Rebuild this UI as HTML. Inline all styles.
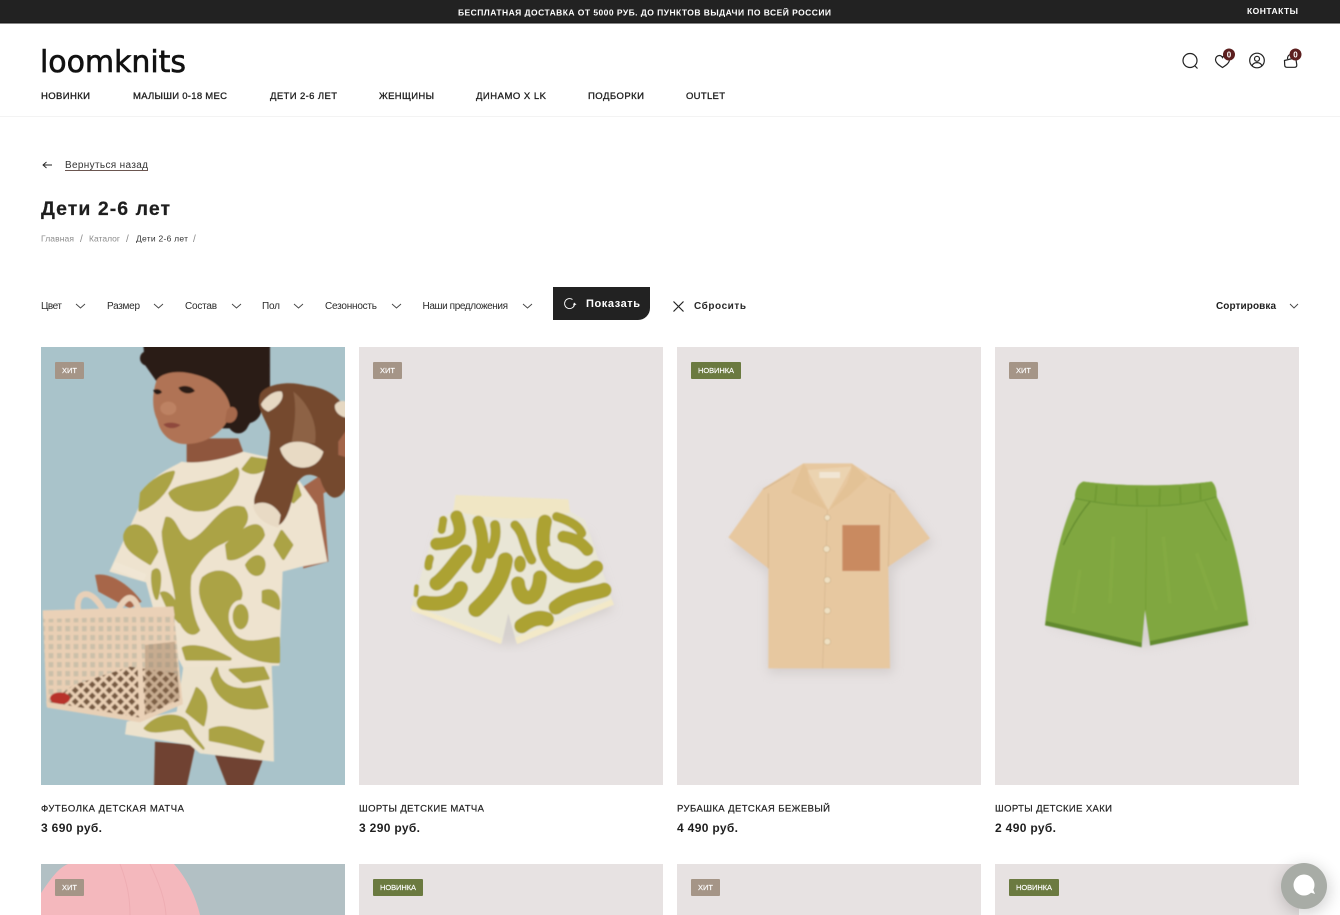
<!DOCTYPE html>
<html lang="ru">
<head>
<meta charset="utf-8">
<title>Дети 2-6 лет</title>
<style>
html,body{margin:0;padding:0;background:#fff;width:1340px;height:915px;overflow:hidden}
svg{display:block;position:absolute;left:0;top:0}
text{font-family:"Liberation Sans",Arial,sans-serif;fill:#1e1e1e}
.nav{font-size:9.5px;stroke:#1e1e1e;stroke-width:.3}
.top{font-size:8.5px;font-weight:700;fill:#fff}
.fl{font-size:10px;fill:#2a2a2a}
.nm{font-size:9.5px;fill:#222;stroke:#222;stroke-width:.2}
.pr{font-size:12px;font-weight:700}
.tg{font-size:7.5px;fill:#fff;stroke:#fff;stroke-width:.15}
.cr{font-size:8.5px;fill:#8a8a8a}
.sl{font-size:10px;fill:#8a8a8a}
.ch{fill:none;stroke:#444;stroke-width:.9}
.ic{fill:none;stroke:#222;stroke-width:1.2}
</style>
</head>
<body>
<svg width="1340" height="915" viewBox="0 0 1340 915" xmlns="http://www.w3.org/2000/svg">
<defs>
<filter id="b1" x="-5%" y="-5%" width="110%" height="110%"><feGaussianBlur stdDeviation="2"/></filter>
<filter id="b2" x="-20%" y="-20%" width="140%" height="140%"><feGaussianBlur stdDeviation="16"/></filter>
<filter id="b3" x="-50%" y="-50%" width="200%" height="200%"><feGaussianBlur stdDeviation="8"/></filter>
<clipPath id="c1"><rect x="41" y="347" width="304" height="438"/></clipPath>
<clipPath id="c2"><rect x="41" y="864" width="304" height="51"/></clipPath>
<pattern id="grid" width="25" height="27" patternUnits="userSpaceOnUse">
<rect width="25" height="27" fill="#e9cfb4"/><rect x="6" y="6" width="14" height="16" fill="#cbbfa9"/>
</pattern>
<pattern id="lat" width="24" height="24" patternUnits="userSpaceOnUse" patternTransform="rotate(45)">
<rect width="24" height="24" fill="#e9cfb4"/><rect x="5" y="5" width="15" height="15" fill="#75583f"/>
</pattern>
</defs>

<!-- top bar -->
<rect width="1340" height="23" fill="#222"/>
<rect y="22.5" width="1340" height="1" fill="#111"/>
<text class="top" x="458" y="15.5" textLength="373">БЕСПЛАТНАЯ ДОСТАВКА ОТ 5000 РУБ. ДО ПУНКТОВ ВЫДАЧИ ПО ВСЕЙ РОССИИ</text>
<text class="top" x="1247" y="14" textLength="51">КОНТАКТЫ</text>

<!-- logo -->
<text x="40" y="72" textLength="146" style="font-family:'DejaVu Sans',sans-serif;font-size:30px;fill:#111;stroke:#111;stroke-width:.6">loomknits</text>

<!-- nav -->
<text class="nav" x="41" y="99" textLength="49">НОВИНКИ</text>
<text class="nav" x="133" y="99" textLength="94">МАЛЫШИ 0-18 МЕС</text>
<text class="nav" x="270" y="99" textLength="67">ДЕТИ 2-6 ЛЕТ</text>
<text class="nav" x="379" y="99" textLength="55">ЖЕНЩИНЫ</text>
<text class="nav" x="476" y="99" textLength="70">ДИНАМО X LK</text>
<text class="nav" x="588" y="99" textLength="56">ПОДБОРКИ</text>
<text class="nav" x="686" y="99" textLength="39">OUTLET</text>
<rect y="116" width="1340" height="1" fill="#f3f3f3"/>

<!-- header icons -->
<circle class="ic" cx="1190" cy="60.5" r="7"/><path class="ic" d="M1195 66l2.500 2.500"/>
<path class="ic" d="M1222.500 67.500c-3-2-7-4.500-7-8 0-2.200 1.800-4 3.800-4 1.400 0 2.600.8 3.200 2 .6-1.200 1.800-2 3.200-2 2 0 3.800 1.800 3.800 4 0 3.500-4 6-7 8z"/>
<circle cx="1229" cy="54.500" r="6" fill="#5c1f1f"/><text x="1229" y="57.300" text-anchor="middle" style="font-size:8px;font-weight:700;fill:#fff">0</text>
<circle class="ic" cx="1257" cy="60.500" r="7.300"/><circle class="ic" cx="1257" cy="58.800" r="2.500"/><path class="ic" d="M1252 66c.8-2.400 2.800-3.400 5-3.400s4.200 1 5 3.400"/>
<path class="ic" d="M1284.500 60.500l8-2 3.500 1 .8 5.500c0 1.500-1 2.300-2.300 2.300h-7.500c-1.300 0-2.300-.8-2.300-2.300z"/><path class="ic" d="M1287.500 59c0-3 1.500-4.500 3.300-4.500"/>
<circle cx="1295.500" cy="54.500" r="6" fill="#5c1f1f"/><text x="1295.500" y="57.300" text-anchor="middle" style="font-size:8px;font-weight:700;fill:#fff">0</text>

<!-- back -->
<path fill="none" stroke="#222" stroke-width=".9" d="M43 165h9M46.500 162l-3.500 3 3.500 3"/>
<text x="65" y="168" textLength="83" style="font-size:10px;fill:#333">Вернуться назад</text>
<rect x="65" y="170" width="83" height="1" fill="#6b5650"/>

<!-- title -->
<text x="41" y="215" textLength="129" style="font-size:19.500px;font-weight:700;stroke:#1e1e1e;stroke-width:.2">Дети 2-6 лет</text>

<!-- crumbs -->
<text class="cr" x="41" y="241.500" textLength="33">Главная</text>
<text class="sl" x="80" y="242">/</text>
<text class="cr" x="89" y="241.500" textLength="31">Каталог</text>
<text class="sl" x="126" y="242">/</text>
<text class="cr" x="136" y="241.500" textLength="52" style="fill:#333">Дети 2-6 лет</text>
<text class="sl" x="193" y="242">/</text>

<!-- filters -->
<text class="fl" x="41" y="309" textLength="21">Цвет</text>
<path class="ch" d="M76 304l4.500 4 4.500-4"/>
<text class="fl" x="107" y="309" textLength="33">Размер</text>
<path class="ch" d="M154 304l4.500 4 4.500-4"/>
<text class="fl" x="185" y="309" textLength="32">Состав</text>
<path class="ch" d="M232 304l4.500 4 4.500-4"/>
<text class="fl" x="262" y="309" textLength="18">Пол</text>
<path class="ch" d="M294 304l4.500 4 4.500-4"/>
<text class="fl" x="325" y="309" textLength="52">Сезонность</text>
<path class="ch" d="M392 304l4.500 4 4.500-4"/>
<text class="fl" x="422.500" y="309" textLength="85.500">Наши предложения</text>
<path class="ch" d="M523 304l4.500 4 4.500-4"/>

<path d="M553 287h97v21a12 12 0 0 1-12 12h-85z" fill="#222"/>
<path fill="none" stroke="#fff" stroke-width=".9" d="M574.500 304.500a5 5 0 1 1-2-5"/><path d="M573 305.500l3.500-1-2.500-2z" fill="#fff"/>
<text x="586" y="307" textLength="54" style="font-size:11px;font-weight:700;fill:#fff">Показать</text>

<path fill="none" stroke="#222" stroke-width="1.200" d="M673.500 301.500l10 10M683.500 301.500l-10 10"/>
<text x="694" y="309" textLength="52" style="font-size:10px;font-weight:700;fill:#2a2a2a">Сбросить</text>

<text x="1216" y="309" textLength="60" style="font-size:10px;font-weight:700">Сортировка</text>
<path class="ch" d="M1290 304l4 4 4-4"/>

<!-- card backgrounds -->
<rect x="41" y="347" width="304" height="438" fill="#a9c3ca"/>
<rect x="359" y="347" width="304" height="438" fill="#e7e2e2"/>
<rect x="677" y="347" width="304" height="438" fill="#e7e2e2"/>
<rect x="995" y="347" width="304" height="438" fill="#e7e2e2"/>

<!-- child -->
<g clip-path="url(#c1)">
<g transform="translate(30 345) scale(.33333)" filter="url(#b1)">
<!-- legs -->
<path d="M375 1190L497 1200 470 1325H372z" fill="#6f4230"/>
<path d="M555 1230L700 1240 668 1325H592z" fill="#6f4230"/>
<!-- arm right -->
<path d="M820 425L880 385 965 260V400L880 445 895 650 820 670 790 500z" fill="#a3654a"/>
<!-- neck -->
<path d="M470 280L625 280 645 335 470 370z" fill="#8f573d"/>
<!-- hair -->
<path d="M340 0H720V140L650 250 560 250 380 110 345 60z" fill="#2a1a15"/>
<g fill="#2a1a15">
<circle cx="390" cy="50" r="42"/><circle cx="450" cy="35" r="42"/><circle cx="520" cy="40" r="50"/><circle cx="600" cy="50" r="60"/><circle cx="670" cy="80" r="50"/>
<circle cx="680" cy="140" r="42"/><circle cx="650" cy="190" r="45"/><circle cx="625" cy="235" r="30"/><circle cx="590" cy="140" r="60"/>
<circle cx="352" cy="40" r="22"/><circle cx="695" cy="50" r="22"/>
</g>
<!-- face -->
<path d="M380 105C362 160 370 200 382 225 392 275 432 300 475 297 535 295 590 255 602 200 600 150 560 105 500 90 450 75 400 80 380 105z" fill="#b07355"/>
<path d="M590 200C595 180 620 180 622 205 620 232 596 240 585 228z" fill="#a5674b"/>
<path d="M445 128C460 118 485 122 495 138 480 150 455 148 445 128z" fill="#2a1a15"/>
<path d="M370 135C380 130 392 132 396 142 386 152 372 150 370 135z" fill="#2a1a15"/>
<path d="M400 238C415 230 435 232 452 240 435 254 412 252 400 238z" fill="#8f483c"/>
<ellipse cx="415" cy="190" rx="24" ry="20" fill="#bd8263"/>
<!-- sweater -->
<path d="M455 350C430 365 400 375 360 412L238 680 348 712 372 800 460 970 748 962 758 680 815 665 892 650 860 480 810 410 730 340 640 320C580 345 500 358 455 350z" fill="#eee3cf"/>
<g fill="#aba344" stroke="#aba344" stroke-width="10" stroke-linejoin="round">
<path d="M420 445C450 410 560 420 620 372 632 390 610 435 560 480 530 500 480 500 455 480 435 470 425 460 420 445z"/>
<path d="M410 520C440 520 440 580 480 590 540 570 570 470 640 490 670 530 620 570 580 590 530 610 510 640 480 690 470 760 490 830 505 855 480 885 440 840 440 760 430 680 400 620 400 560z"/>
<path d="M520 700C570 660 620 690 632 740 640 770 590 790 600 850 625 915 700 885 745 880L745 950C650 950 600 900 560 840 520 790 500 740 520 700z"/>
<path d="M335 445C370 400 410 385 430 382 420 420 390 470 330 495z"/>
<path d="M285 570C300 520 360 540 380 620L360 655C320 630 280 610 285 570z"/>
<path d="M640 372C680 400 710 365 730 350L665 340z"/>
<path d="M590 600C630 560 690 510 700 570 690 600 620 650 595 640z"/>
<path d="M650 660C680 615 710 640 700 670 690 700 660 690 650 660z"/>
<path d="M700 740C730 730 750 750 745 790L700 770z"/>
<path d="M370 680C390 660 395 700 380 760 370 740 365 700 370 680z"/>
<path d="M395 745C420 735 450 790 448 830L420 800z"/>
<path d="M460 910C500 895 560 920 600 942H470z"/>
<path d="M755 560L785 600 760 640 735 600z"/>
<path d="M800 420L810 450 790 470z"/>
</g>
<ellipse cx="632" cy="815" rx="30" ry="44" fill="#aba344" stroke="#eee3cf" stroke-width="12"/>
<!-- sleeve cuff -->
<path d="M245 670L340 708 350 688 255 650z" fill="#f0e6d4"/>
<!-- shorts -->
<path d="M460 965L725 958 730 1100 732 1250 510 1225 480 1200 285 1168 290 1130 440 1100z" fill="#ece2cd"/>
<g fill="#aba344" stroke="#aba344" stroke-width="8" stroke-linejoin="round">
<path d="M560 970C570 1040 640 1040 690 1025L712 1085C620 1105 560 1060 545 1000z"/>
<path d="M500 1030C540 1060 530 1100 520 1140L470 1100C480 1080 490 1060 500 1030z"/>
<path d="M345 1150C380 1110 440 1100 470 1130 490 1180 500 1180 520 1210L460 1150C420 1150 370 1170 345 1150z"/>
<path d="M540 1155C590 1130 660 1170 700 1190L690 1220C620 1200 570 1190 540 1185z"/>
<path d="M600 975L700 968 715 1000 640 1010z"/>
</g>
<!-- hand -->
<path d="M195 690C240 680 300 720 335 770L300 790 260 770 205 740z" fill="#a7664a"/>
<!-- basket -->
<path fill="none" stroke="#e8d0b8" stroke-width="18" d="M148 810C125 740 190 700 245 850 265 780 300 720 325 790"/>
<path d="M38 800L430 785 458 1075 330 1130 50 1085z" fill="url(#grid)"/>
<path d="M130 1020L300 965 440 985 450 1075 330 1120 50 1080z" fill="url(#lat)"/>
<ellipse cx="90" cy="1060" rx="30" ry="18" fill="#b8302c"/>
<path d="M345 900L435 890 450 1060 345 1110z" fill="#8a6a4e" opacity=".35"/>
<path d="M38 796L430 785 434 812 40 822z" fill="#ead1b7"/>
<path d="M48 1070L330 1118 458 1062 458 1078 330 1132 52 1088z" fill="#e8d0b6"/>
<path d="M318 810L330 820 345 1120 328 1120z" fill="#ead1b7"/>
<!-- bear -->
<path d="M690 150C700 120 770 105 830 122 900 128 950 170 950 220L950 425C925 478 890 465 870 400 830 375 805 395 792 440 780 500 760 552 730 540 680 510 660 480 680 440 710 380 720 300 720 260 700 210 680 190 690 150z" fill="#75492e"/>
<path d="M790 140C835 175 865 235 855 295L785 290C795 240 800 185 790 140z" fill="#8d6244"/>
<path d="M693 178C705 155 735 135 755 140 765 160 745 185 715 200 705 195 697 190 693 178z" fill="#e6d8c2"/>
<path d="M915 180C925 165 945 165 950 172V218C930 215 912 200 915 180z" fill="#e6d8c2"/>
<path d="M750 310C780 280 840 285 880 320 870 360 830 378 790 362 765 345 755 330 750 310z" fill="#e8dac4"/>
<path d="M668 482C690 465 730 470 752 510L745 548C710 540 680 522 668 482z" fill="#e8dac4"/>
<path d="M925 290L960 240V340L925 330z" fill="#a3654a"/>
</g>
</g>

<!-- shorts match -->
<g transform="translate(400 480) scale(.33333)" filter="url(#b1)">
<path d="M60 400L300 495 350 495 640 390 560 160 120 160z" fill="#c4bfba" opacity=".5" filter="url(#b2)"/>
<path d="M165 45L505 58 510 95 555 120 640 370 350 490 325 400 305 490 35 380 110 130 160 90z" fill="#e9e6d6"/>
<path d="M168 45L505 58 510 98C400 125 270 120 160 92z" fill="#f0e6c4"/>
<path d="M35 376L305 476 302 492 35 392zM345 474L635 358 642 374 352 492z" fill="#f3e9c8"/>
<g fill="none" stroke="#aca233" stroke-linecap="round" stroke-linejoin="round">
<path stroke-width="38" d="M170 110C195 170 170 190 110 192"/>
<path stroke-width="36" d="M235 125C255 180 250 220 232 262"/>
<path stroke-width="30" d="M285 135C292 170 280 200 268 222"/>
<path stroke-width="44" d="M110 310C140 290 170 240 195 215"/>
<path stroke-width="44" d="M72 368C130 378 170 360 182 325"/>
<path stroke-width="46" d="M228 388C270 350 305 310 316 240"/>
<path stroke-width="28" d="M345 135C375 165 365 190 395 240"/>
<path stroke-width="42" d="M354 310C360 370 415 370 420 292"/>
<path stroke-width="44" d="M468 382C520 340 570 345 612 330"/>
<path stroke-width="44" d="M365 438C395 415 420 410 440 418"/>
<path stroke-width="42" d="M435 125C420 190 430 255 500 285 535 295 570 282 588 262"/>
<path stroke-width="28" d="M470 110C520 125 540 145 545 160"/>
<path stroke-width="36" d="M490 170C530 175 550 195 562 210"/>
<path stroke-width="24" d="M90 235C85 250 85 255 85 260"/>
<path stroke-width="24" d="M130 120L125 150"/>
<path stroke-width="14" d="M50 320L48 345"/>
</g>
<path stroke-width="14" stroke="#e9e6d6" fill="none" stroke-linecap="round" d="M450 205C455 235 475 242 495 236"/>
<ellipse cx="360" cy="252" rx="18" ry="25" fill="#aca233"/>
</g>

<!-- shirt -->
<g transform="translate(720 450) scale(.33333)" filter="url(#b1)">
<path d="M40 290L145 370 145 670 520 670 520 360 640 280 520 120 130 120z" fill="#bdb8b6" opacity=".45" filter="url(#b2)"/>
<path d="M250 40L130 115 25 262 145 355 145 655 510 655 505 350 630 265 525 125 395 40z" fill="#e7c8a0"/>
<path d="M262 60L395 50 325 180z" fill="#ebd3b0"/>
<rect x="298" y="66" width="62" height="18" fill="#f1e6d4"/>
<path d="M250 40L213 128 265 155 325 182 270 100 262 55z" fill="#e3c296"/>
<path d="M395 40L442 85 385 140 325 182 380 100 393 62z" fill="#e3c296"/>
<path d="M322 180L308 655" stroke="#d3b48c" stroke-width="2" fill="none"/>
<path d="M145 130L145 355M510 130L505 350" stroke="#d6b58c" stroke-width="3" fill="none"/>
<path d="M450 80L525 125M130 118L210 72" stroke="#d3b48c" stroke-width="3" fill="none"/>
<rect x="367" y="225" width="113" height="138" fill="#c98a61"/>
<g fill="#efe0c2" stroke="#cdb187" stroke-width="2">
<circle cx="322" cy="203" r="9"/><circle cx="320" cy="297" r="10"/><circle cx="322" cy="390" r="10"/><circle cx="322" cy="482" r="10"/><circle cx="322" cy="575" r="10"/>
</g>
</g>

<!-- green shorts -->
<g transform="translate(1030 470) scale(.33333)" filter="url(#b1)">
<path d="M60 465L340 530 370 525 650 465 560 100 140 100z" fill="#c2bebb" opacity=".45" filter="url(#b2)"/>
<path d="M160 35C280 50 430 50 545 35 556 45 560 60 560 80 610 180 640 340 655 465L360 525 345 420 335 530 45 465C60 330 90 180 135 85 135 60 145 40 160 35z" fill="#80a73f"/>
<path d="M48 453L335 518 335 532 45 466zM360 513L652 453 655 466 360 527z" fill="#628a2d"/>
<path d="M160 35C280 50 430 50 545 35 556 45 560 60 560 80 450 118 270 115 135 85 135 60 145 40 160 35z" fill="#7ca43b"/>
<path d="M135 85C270 115 450 118 560 80" stroke="#679330" stroke-width="3" fill="none"/>
<path d="M200 45L195 95M260 50L258 105M320 55L322 110M390 55L388 110M450 50L452 100M510 42L512 90" stroke="#6f9932" stroke-width="5" fill="none"/>
<path d="M180 95C150 130 125 170 100 225" stroke="#628a2d" stroke-width="4" fill="none"/>
<path d="M525 95C545 130 565 170 590 212" stroke="#6c9630" stroke-width="3" fill="none"/>
<path d="M350 115L347 420" stroke="#739d35" stroke-width="3" fill="none"/>
<path d="M400 200L420 400M250 200L240 400M500 250L560 420M150 300L130 430" stroke="#8bb14a" stroke-width="10" fill="none" opacity=".35"/>
</g>

<!-- tags -->
<rect x="55" y="362" width="29" height="17" rx="1" fill="#a59587"/><text class="tg" x="62" y="373" textLength="15">ХИТ</text>
<rect x="373" y="362" width="29" height="17" rx="1" fill="#a59587"/><text class="tg" x="380" y="373" textLength="15">ХИТ</text>
<rect x="691" y="362" width="50" height="17" rx="1" fill="#6b7a40"/><text class="tg" x="698" y="373" textLength="36">НОВИНКА</text>
<rect x="1009" y="362" width="29" height="17" rx="1" fill="#a59587"/><text class="tg" x="1016" y="373" textLength="15">ХИТ</text>

<!-- names -->
<text class="nm" x="41" y="811.500" textLength="143">ФУТБОЛКА ДЕТСКАЯ МАТЧА</text>
<text class="pr" x="41" y="832" textLength="61">3 690 руб.</text>
<text class="nm" x="359" y="811.500" textLength="125">ШОРТЫ ДЕТСКИЕ МАТЧА</text>
<text class="pr" x="359" y="832" textLength="61">3 290 руб.</text>
<text class="nm" x="677" y="811.500" textLength="153">РУБАШКА ДЕТСКАЯ БЕЖЕВЫЙ</text>
<text class="pr" x="677" y="832" textLength="61">4 490 руб.</text>
<text class="nm" x="995" y="811.500" textLength="117">ШОРТЫ ДЕТСКИЕ ХАКИ</text>
<text class="pr" x="995" y="832" textLength="61">2 490 руб.</text>

<!-- row 2 -->
<rect x="41" y="864" width="304" height="51" fill="#b2c0c4"/>
<g clip-path="url(#c2)"><path d="M41 893C50 880 58 868 68 864H174C188 880 196 898 200 915H41z" fill="#f4b8bd"/>
<path d="M150 864C160 885 165 900 166 915M120 864C128 885 130 900 130 915" stroke="#eeadb3" stroke-width="1" fill="none"/></g>
<rect x="359" y="864" width="304" height="51" fill="#e7e2e2"/>
<rect x="677" y="864" width="304" height="51" fill="#e7e2e2"/>
<rect x="995" y="864" width="304" height="51" fill="#e7e2e2"/>
<rect x="55" y="879" width="29" height="17" rx="1" fill="#a59587"/><text class="tg" x="62" y="890" textLength="15">ХИТ</text>
<rect x="373" y="879" width="50" height="17" rx="1" fill="#6b7a40"/><text class="tg" x="380" y="890" textLength="36">НОВИНКА</text>
<rect x="691" y="879" width="29" height="17" rx="1" fill="#a59587"/><text class="tg" x="698" y="890" textLength="15">ХИТ</text>
<rect x="1009" y="879" width="50" height="17" rx="1" fill="#6b7a40"/><text class="tg" x="1016" y="890" textLength="36">НОВИНКА</text>

<!-- chat -->
<circle cx="1305" cy="890" r="24" fill="#000" opacity=".18" filter="url(#b3)"/>
<circle cx="1304" cy="886" r="23" fill="#a8aca6"/>
<circle cx="1304" cy="885" r="10.500" fill="#fff"/>
<path d="M1309 892l6 2-2.500-6z" fill="#fff"/>
</svg>
</body>
</html>
